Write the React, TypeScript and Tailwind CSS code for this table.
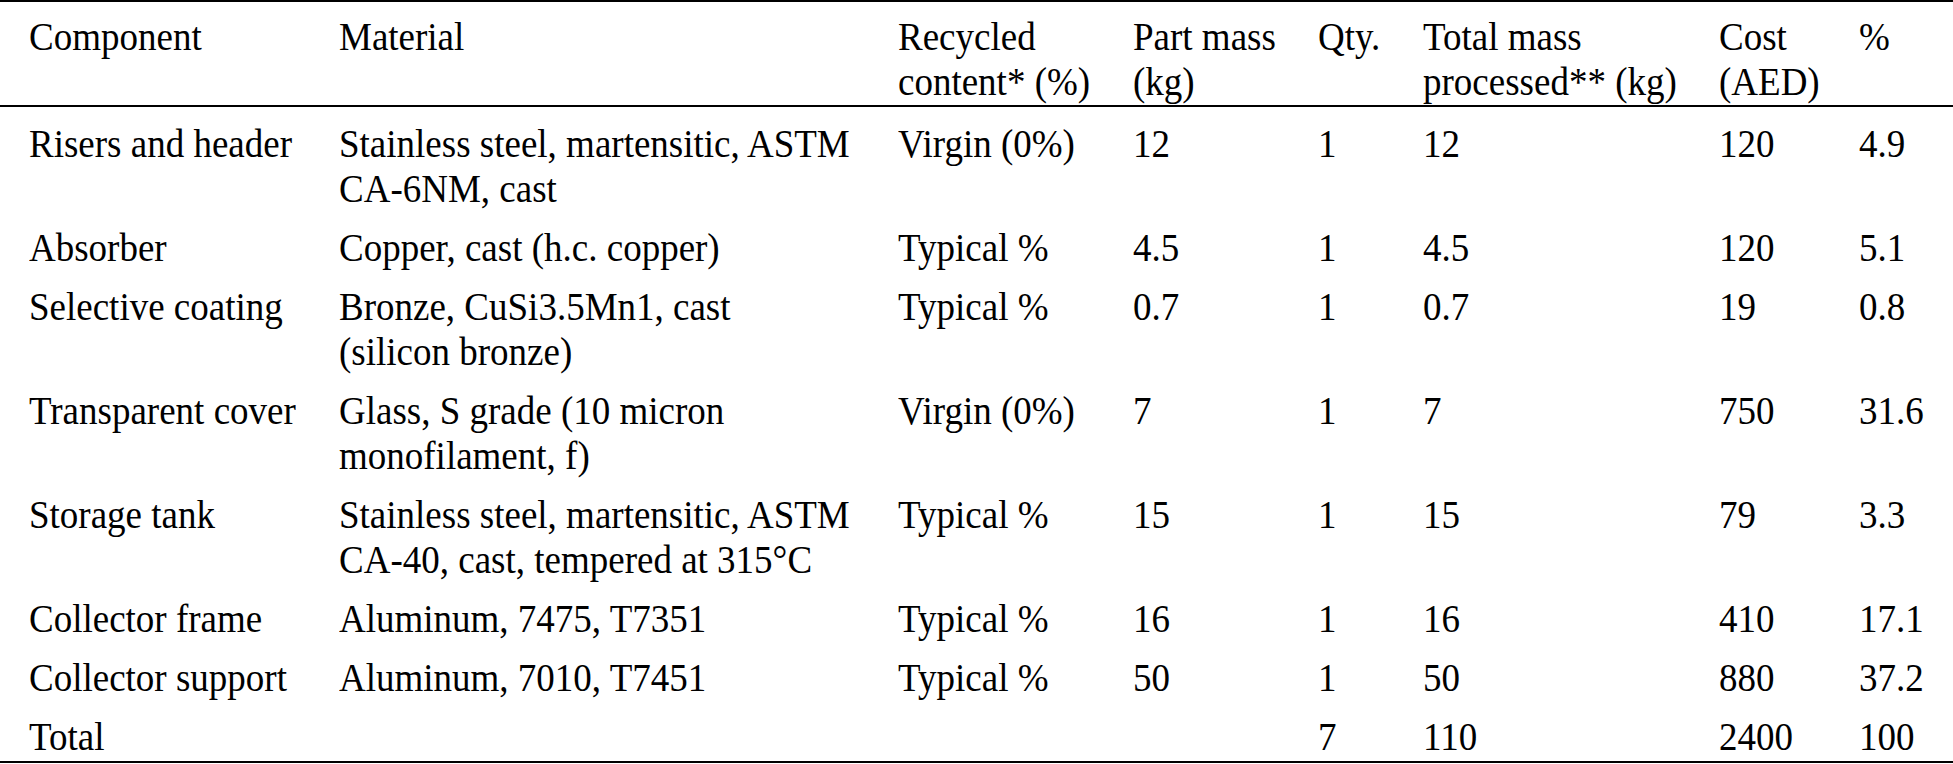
type Row = {
  component: string;
  material: string[];
  recycled: string;
  partMass: string;
  qty: string;
  totalMass: string;
  cost: string;
  pct: string;
};

const rows: Row[] = [
  { component: "Risers and header", material: ["Stainless steel, martensitic, ASTM", "CA-6NM, cast"], recycled: "Virgin (0%)", partMass: "12", qty: "1", totalMass: "12", cost: "120", pct: "4.9" },
  { component: "Absorber", material: ["Copper, cast (h.c. copper)"], recycled: "Typical %", partMass: "4.5", qty: "1", totalMass: "4.5", cost: "120", pct: "5.1" },
  { component: "Selective coating", material: ["Bronze, CuSi3.5Mn1, cast", "(silicon bronze)"], recycled: "Typical %", partMass: "0.7", qty: "1", totalMass: "0.7", cost: "19", pct: "0.8" },
  { component: "Transparent cover", material: ["Glass, S grade (10 micron", "monofilament, f)"], recycled: "Virgin (0%)", partMass: "7", qty: "1", totalMass: "7", cost: "750", pct: "31.6" },
  { component: "Storage tank", material: ["Stainless steel, martensitic, ASTM", "CA-40, cast, tempered at 315°C"], recycled: "Typical %", partMass: "15", qty: "1", totalMass: "15", cost: "79", pct: "3.3" },
  { component: "Collector frame", material: ["Aluminum, 7475, T7351"], recycled: "Typical %", partMass: "16", qty: "1", totalMass: "16", cost: "410", pct: "17.1" },
  { component: "Collector support", material: ["Aluminum, 7010, T7451"], recycled: "Typical %", partMass: "50", qty: "1", totalMass: "50", cost: "880", pct: "37.2" },
];

const headers: string[][] = [
  ["Component"],
  ["Material"],
  ["Recycled", "content* (%)"],
  ["Part mass", "(kg)"],
  ["Qty."],
  ["Total mass", "processed** (kg)"],
  ["Cost", "(AED)"],
  ["%"],
];

// column starts: 29, 339, 898, 1133, 1318, 1423, 1719, 1859
const cols = "grid grid-cols-[310px_559px_235px_185px_105px_296px_140px_1fr] pl-[29px]";

const Lines = ({ lines }: { lines: string[] }) => (
  <div>
    {lines.map((l, i) => (
      <div key={i} className="whitespace-nowrap scale-y-[1.08]">
        {l}
      </div>
    ))}
  </div>
);

const App = () => {
  return (
    <div className="w-[1953px] h-[764px] bg-white text-black font-['Liberation_Serif','Times_New_Roman',serif] text-[37px] leading-[45px]">
      <div className="border-t-2 border-b-2 border-black">
        {/* header */}
        <div className={`${cols} pt-[12px] pb-[1px] border-b-2 border-black`}>
          {headers.map((h, i) => (
            <Lines key={i} lines={h} />
          ))}
        </div>

        {/* body */}
        {rows.map((r) => (
          <div key={r.component} className={`${cols} pt-[14px]`}>
            <Lines lines={[r.component]} />
            <Lines lines={r.material} />
            <Lines lines={[r.recycled]} />
            <Lines lines={[r.partMass]} />
            <Lines lines={[r.qty]} />
            <Lines lines={[r.totalMass]} />
            <Lines lines={[r.cost]} />
            <Lines lines={[r.pct]} />
          </div>
        ))}

        {/* total */}
        <div className={`${cols} pt-[14px] pb-[2px]`}>
          <Lines lines={["Total"]} />
          <div />
          <div />
          <div />
          <Lines lines={["7"]} />
          <Lines lines={["110"]} />
          <Lines lines={["2400"]} />
          <Lines lines={["100"]} />
        </div>
      </div>
    </div>
  );
};

export default App;
